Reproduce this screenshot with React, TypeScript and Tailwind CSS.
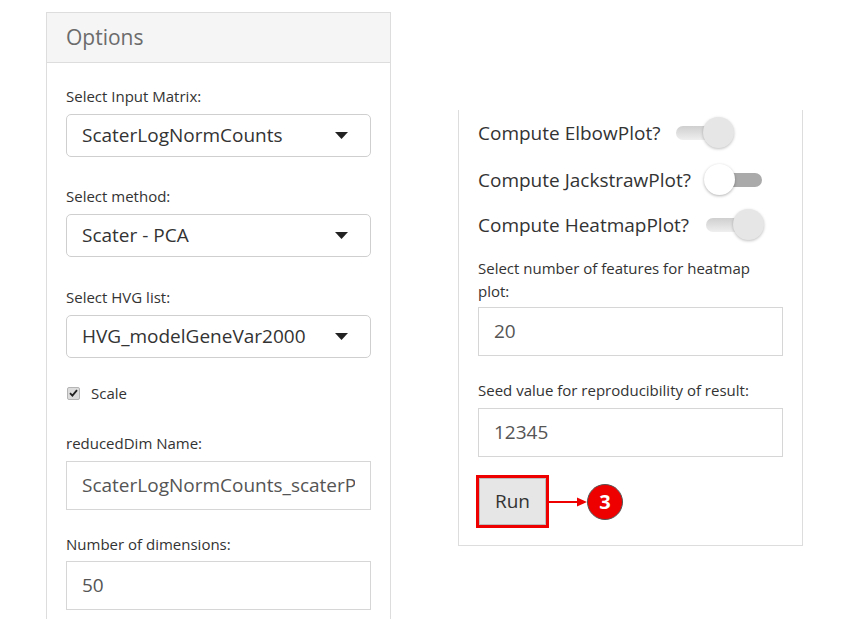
import React from "react";

const font = { fontFamily: '"Open Sans", "Liberation Sans", sans-serif' };

function SelectBox({ value }: { value: string }) {
    return (
        <div className="flex h-[43px] items-center justify-between rounded-[5px] border border-[#cfcfcf] bg-white pl-[15px] pr-[22px] text-[19px] text-[#333]">
            <span>{value}</span>
            <svg width="13" height="7" viewBox="0 0 13 7">
                <path d="M0 0 L13 0 L6.5 7 Z" fill="#222" />
            </svg>
        </div>
    );
}

function TextBox({ value }: { value: string }) {
    return (
        <div className="flex h-[49px] items-center border border-[#d6d6d6] bg-white pl-[15px] pr-[15px] text-[19px] text-[#555]">
            <div className="flex-1 overflow-hidden whitespace-nowrap">{value}</div>
        </div>
    );
}

function Label({ children, className = "" }: { children: React.ReactNode; className?: string }) {
    return <div className={"text-[15px] leading-[23px] text-[#333] " + className}>{children}</div>;
}

function Toggle({ on, knobWhite }: { on: boolean; knobWhite?: boolean }) {
    if (on) {
        return (
            <div className="relative h-[32px] w-[58px]">
                <div className="absolute left-0 top-[9px] h-[14px] w-[44px] rounded-full bg-gradient-to-b from-[#cfcfcf] to-[#efefef]" />
                <div className="absolute right-0 top-0 h-[31px] w-[31px] rounded-full bg-[#e6e6e6] shadow-[0_1px_3px_rgba(0,0,0,0.25)]" />
            </div>
        );
    }
    return (
        <div className="relative h-[32px] w-[58px]">
            <div className="absolute right-0 top-[9px] h-[14px] w-[44px] rounded-full bg-[#aaaaaa]" />
            <div className={"absolute left-0 top-0 h-[31px] w-[31px] rounded-full shadow-[0_1px_3px_rgba(0,0,0,0.3)] " + (knobWhite ? "bg-white" : "bg-[#e6e6e6]")} />
        </div>
    );
}

export default function App() {
    return (
        <div className="flex min-h-[639px] w-[848px] items-start bg-white pl-[46px] pt-[12px]" style={font}>
            {/* left panel */}
            <div className="w-[345px] border-x border-t border-[#dddddd]">
                <div className="flex h-[50px] items-center border-b border-[#dddddd] bg-[#f5f5f5] pl-[19px] text-[21px] text-[#6b6b6b]">
                    Options
                </div>
                <div className="px-[19px] pb-[9px] pt-[22px]">
                    <Label className="mb-[6px]">Select Input Matrix:</Label>
                    <SelectBox value="ScaterLogNormCounts" />

                    <Label className="mb-[6px] mt-[28px]">Select method:</Label>
                    <SelectBox value="Scater - PCA" />

                    <Label className="mb-[6px] mt-[29px]">Select HVG list:</Label>
                    <SelectBox value="HVG_modelGeneVar2000" />

                    <div className="mt-[25px] flex h-[20px] items-center gap-[11px] text-[15px] text-[#333]">
                        <span className="ml-[1px] flex h-[13px] w-[13px] items-center justify-center rounded-[2px] border border-[#b5b5b5] bg-[#dcdcdc]">
                            <svg width="9" height="8" viewBox="0 0 9 8">
                                <path d="M1 4.2 L3.4 6.6 L8 1.2" stroke="#222" strokeWidth="1.8" fill="none" />
                            </svg>
                        </span>
                        <span>Scale</span>
                    </div>

                    <Label className="mb-[6px] mt-[29px]">reducedDim Name:</Label>
                    <TextBox value="ScaterLogNormCounts_scaterPCA" />

                    <Label className="mb-[5px] mt-[23px]">Number of dimensions:</Label>
                    <TextBox value="50" />
                </div>
            </div>

            {/* right panel */}
            <div className="ml-[67px] mt-[98px] w-[345px] border-x border-b border-[#dddddd] px-[19px] pb-[17px] pt-[7px]">
                <div className="flex h-[32px] items-center gap-[16px] text-[19px] text-[#333]">
                    <span>Compute ElbowPlot?</span>
                    <Toggle on />
                </div>
                <div className="mt-[15px] flex h-[32px] items-center gap-[13px] text-[19px] text-[#333]">
                    <span>Compute JackstrawPlot?</span>
                    <Toggle on={false} knobWhite />
                </div>
                <div className="mt-[13px] flex h-[32px] items-center gap-[17px] text-[19px] text-[#333]">
                    <span>Compute HeatmapPlot?</span>
                    <Toggle on />
                </div>

                <Label className="mb-[4px] mt-[16px]">Select number of features for heatmap plot:</Label>
                <TextBox value="20" />

                <Label className="mb-[6px] mt-[23px]">Seed value for reproducibility of result:</Label>
                <TextBox value="12345" />

                <div className="mt-[18px] flex items-center">
                    <div className="ml-[-2px] border-[3px] border-[#ee0000]">
                        <div className="flex h-[47px] w-[67px] items-center justify-center border border-[#bdbdbd] bg-[#e6e6e6] text-[19px] text-[#333]">
                            Run
                        </div>
                    </div>
                    <svg width="38" height="12" viewBox="0 0 38 12">
                        <line x1="0" y1="6" x2="30" y2="6" stroke="#ee0000" strokeWidth="2" />
                        <path d="M28 1.5 L38 6 L28 10.5 Z" fill="#ee0000" />
                    </svg>
                    <div className="flex h-[36px] w-[36px] items-center justify-center rounded-full border border-[#555] bg-[#ee0000] text-[20px] font-bold text-white">
                        3
                    </div>
                </div>
            </div>
        </div>
    );
}
